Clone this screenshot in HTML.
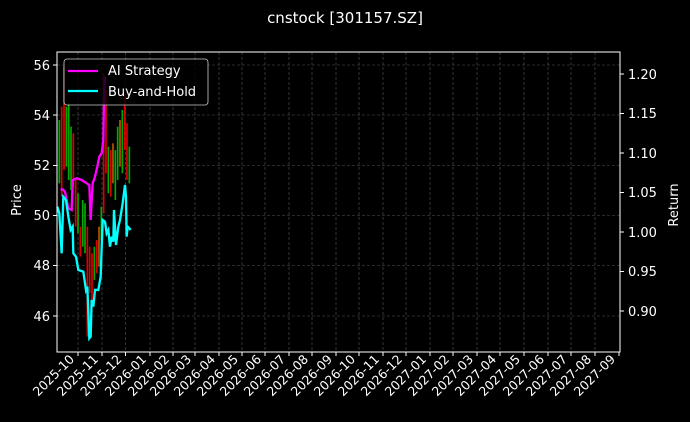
<!DOCTYPE html>
<html><head><meta charset="utf-8"><style>
html,body{margin:0;padding:0;background:#000;}
svg{display:block;font-family:"DejaVu Sans","Liberation Sans",sans-serif;}
</style></head><body>
<svg width="690" height="422" viewBox="0 0 690 422" xmlns="http://www.w3.org/2000/svg">
<rect width="690" height="422" fill="#000"/>
<text x="345" y="23" fill="#fff" font-size="15" text-anchor="middle">cnstock [301157.SZ]</text>
<g stroke="#555" stroke-width="0.6" stroke-dasharray="3,2">
<line x1="57" x2="620" y1="65" y2="65"/><line x1="57" x2="620" y1="115" y2="115"/><line x1="57" x2="620" y1="165.5" y2="165.5"/><line x1="57" x2="620" y1="215.5" y2="215.5"/><line x1="57" x2="620" y1="265.5" y2="265.5"/><line x1="57" x2="620" y1="316" y2="316"/>
<line y1="52" y2="352" x1="78" x2="78"/><line y1="52" y2="352" x1="102" x2="102"/><line y1="52" y2="352" x1="125.5" x2="125.5"/><line y1="52" y2="352" x1="150" x2="150"/><line y1="52" y2="352" x1="173" x2="173"/><line y1="52" y2="352" x1="195" x2="195"/><line y1="52" y2="352" x1="219" x2="219"/><line y1="52" y2="352" x1="242" x2="242"/><line y1="52" y2="352" x1="265" x2="265"/><line y1="52" y2="352" x1="289" x2="289"/><line y1="52" y2="352" x1="312" x2="312"/><line y1="52" y2="352" x1="336" x2="336"/><line y1="52" y2="352" x1="359" x2="359"/><line y1="52" y2="352" x1="383" x2="383"/><line y1="52" y2="352" x1="406" x2="406"/><line y1="52" y2="352" x1="430" x2="430"/><line y1="52" y2="352" x1="453" x2="453"/><line y1="52" y2="352" x1="477" x2="477"/><line y1="52" y2="352" x1="500" x2="500"/><line y1="52" y2="352" x1="524" x2="524"/><line y1="52" y2="352" x1="548" x2="548"/><line y1="52" y2="352" x1="571" x2="571"/><line y1="52" y2="352" x1="595" x2="595"/>
</g>
<g transform="translate(40,40) scale(0.3333)" fill="none">
<g stroke-width="5">
<line x1="58" y1="240" x2="58" y2="430" stroke="#0a0"/>
<line x1="65" y1="200" x2="65" y2="470" stroke="#d00"/>
<line x1="72" y1="80" x2="72" y2="390" stroke="#d00"/>
<line x1="79" y1="200" x2="79" y2="380" stroke="#0a0"/>
<line x1="86" y1="190" x2="86" y2="420" stroke="#0a0"/>
<line x1="93" y1="260" x2="93" y2="450" stroke="#0a0"/>
<line x1="100" y1="280" x2="100" y2="440" stroke="#d00"/>
<line x1="107" y1="420" x2="107" y2="560" stroke="#d00"/>
<line x1="114" y1="460" x2="114" y2="580" stroke="#0a0"/>
<line x1="121" y1="560" x2="121" y2="650" stroke="#d00"/>
<line x1="128" y1="480" x2="128" y2="620" stroke="#0a0"/>
<line x1="135" y1="490" x2="135" y2="640" stroke="#0a0"/>
<line x1="142" y1="560" x2="142" y2="890" stroke="#d00"/>
<line x1="149" y1="620" x2="149" y2="760" stroke="#d00"/>
<line x1="156" y1="640" x2="156" y2="780" stroke="#d00"/>
<line x1="163" y1="620" x2="163" y2="720" stroke="#0a0"/>
<line x1="170" y1="600" x2="170" y2="700" stroke="#d00"/>
<line x1="177" y1="560" x2="177" y2="680" stroke="#b50"/>
<line x1="184" y1="500" x2="184" y2="600" stroke="#0a0"/>
<line x1="191" y1="100" x2="191" y2="520" stroke="#d00"/>
<line x1="198" y1="150" x2="198" y2="400" stroke="#d00"/>
<line x1="205" y1="320" x2="205" y2="460" stroke="#0a0"/>
<line x1="212" y1="330" x2="212" y2="470" stroke="#d00"/>
<line x1="219" y1="310" x2="219" y2="430" stroke="#b50"/>
<line x1="226" y1="330" x2="226" y2="480" stroke="#0a0"/>
<line x1="233" y1="260" x2="233" y2="420" stroke="#0a0"/>
<line x1="240" y1="240" x2="240" y2="380" stroke="#b50"/>
<line x1="247" y1="210" x2="247" y2="400" stroke="#0a0"/>
<line x1="254" y1="160" x2="254" y2="330" stroke="#d00"/>
<line x1="261" y1="250" x2="261" y2="420" stroke="#d00"/>
<line x1="268" y1="320" x2="268" y2="430" stroke="#0a0"/>
</g>
<polyline stroke="#f0f" stroke-width="7" points="62,450 68,448 75,455 85,505 95,510 98,420 110,415 125,420 140,430 148,435 152,540 158,430 165,410 172,380 178,350 185,340 190,300 192,180 195,110"/>
<polyline stroke="#0ff" stroke-width="7" points="52,500 58,520 65,640 70,470 78,480 85,530 92,570 98,560 100,640 108,650 115,690 130,695 138,750 142,740 148,895 152,890 155,780 160,800 165,750 175,750 182,710 188,540 195,545 200,580 205,570 210,620 215,590 220,605 222,510 228,615 235,560 240,540 248,490 255,435 258,470 260,590 263,560 268,565 272,570"/>
</g>
<rect x="64" y="59" width="144" height="46" rx="3" fill="#000" fill-opacity="0.8" stroke="#ccc" stroke-width="0.8"/>
<line x1="68" x2="98" y1="71" y2="71" stroke="#f0f" stroke-width="2.3"/>
<line x1="68" x2="98" y1="91" y2="91" stroke="#0ff" stroke-width="2.3"/>
<text x="108" y="75" fill="#fff" font-size="13">AI Strategy</text>
<text x="108" y="96" fill="#fff" font-size="13">Buy-and-Hold</text>
<rect x="57" y="52" width="563" height="300" fill="none" stroke="#fff" stroke-width="1"/>
<g fill="#fff" font-size="13" text-anchor="end">
<text x="50" y="70">56</text><text x="50" y="120">54</text><text x="50" y="170">52</text><text x="50" y="220">50</text><text x="50" y="270">48</text><text x="50" y="321">46</text>
</g>
<g stroke="#fff"><line x1="53" x2="57" y1="65" y2="65"/><line x1="53" x2="57" y1="115" y2="115"/><line x1="53" x2="57" y1="165.5" y2="165.5"/><line x1="53" x2="57" y1="215.5" y2="215.5"/><line x1="53" x2="57" y1="265.5" y2="265.5"/><line x1="53" x2="57" y1="316" y2="316"/>
<line x1="620" x2="624" y1="74" y2="74"/><line x1="620" x2="624" y1="113.5" y2="113.5"/><line x1="620" x2="624" y1="153" y2="153"/><line x1="620" x2="624" y1="192.5" y2="192.5"/><line x1="620" x2="624" y1="232" y2="232"/><line x1="620" x2="624" y1="271.5" y2="271.5"/><line x1="620" x2="624" y1="311" y2="311"/></g>
<g fill="#fff" font-size="13">
<text x="628" y="79">1.20</text><text x="628" y="118">1.15</text><text x="628" y="158">1.10</text><text x="628" y="197">1.05</text><text x="628" y="237">1.00</text><text x="628" y="276">0.95</text><text x="628" y="316">0.90</text>
</g>
<text transform="translate(21,200) rotate(-90)" fill="#fff" font-size="13" text-anchor="middle">Price</text>
<text transform="translate(678,205) rotate(-90)" fill="#fff" font-size="13" text-anchor="middle">Return</text>
<g stroke="#fff">
<line x1="78" x2="78" y1="352" y2="356"/><line x1="102" x2="102" y1="352" y2="356"/><line x1="125.5" x2="125.5" y1="352" y2="356"/><line x1="150" x2="150" y1="352" y2="356"/><line x1="173" x2="173" y1="352" y2="356"/><line x1="195" x2="195" y1="352" y2="356"/><line x1="219" x2="219" y1="352" y2="356"/><line x1="242" x2="242" y1="352" y2="356"/><line x1="265" x2="265" y1="352" y2="356"/><line x1="289" x2="289" y1="352" y2="356"/><line x1="312" x2="312" y1="352" y2="356"/><line x1="336" x2="336" y1="352" y2="356"/><line x1="359" x2="359" y1="352" y2="356"/><line x1="383" x2="383" y1="352" y2="356"/><line x1="406" x2="406" y1="352" y2="356"/><line x1="430" x2="430" y1="352" y2="356"/><line x1="453" x2="453" y1="352" y2="356"/><line x1="477" x2="477" y1="352" y2="356"/><line x1="500" x2="500" y1="352" y2="356"/><line x1="524" x2="524" y1="352" y2="356"/><line x1="548" x2="548" y1="352" y2="356"/><line x1="571" x2="571" y1="352" y2="356"/><line x1="595" x2="595" y1="352" y2="356"/><line x1="619" x2="619" y1="352" y2="356"/>
</g>
<g fill="#fff" font-size="12.5" text-anchor="end">
<text transform="translate(75,360) rotate(-45)">2025-10</text>
<text transform="translate(99,360) rotate(-45)">2025-11</text>
<text transform="translate(122.5,360) rotate(-45)">2025-12</text>
<text transform="translate(147,360) rotate(-45)">2026-01</text>
<text transform="translate(170,360) rotate(-45)">2026-02</text>
<text transform="translate(192,360) rotate(-45)">2026-03</text>
<text transform="translate(216,360) rotate(-45)">2026-04</text>
<text transform="translate(239,360) rotate(-45)">2026-05</text>
<text transform="translate(262,360) rotate(-45)">2026-06</text>
<text transform="translate(286,360) rotate(-45)">2026-07</text>
<text transform="translate(309,360) rotate(-45)">2026-08</text>
<text transform="translate(333,360) rotate(-45)">2026-09</text>
<text transform="translate(356,360) rotate(-45)">2026-10</text>
<text transform="translate(380,360) rotate(-45)">2026-11</text>
<text transform="translate(403,360) rotate(-45)">2026-12</text>
<text transform="translate(427,360) rotate(-45)">2027-01</text>
<text transform="translate(450,360) rotate(-45)">2027-02</text>
<text transform="translate(474,360) rotate(-45)">2027-03</text>
<text transform="translate(497,360) rotate(-45)">2027-04</text>
<text transform="translate(521,360) rotate(-45)">2027-05</text>
<text transform="translate(545,360) rotate(-45)">2027-06</text>
<text transform="translate(568,360) rotate(-45)">2027-07</text>
<text transform="translate(592,360) rotate(-45)">2027-08</text>
<text transform="translate(616,360) rotate(-45)">2027-09</text>
</g>
</svg>
</body></html>
